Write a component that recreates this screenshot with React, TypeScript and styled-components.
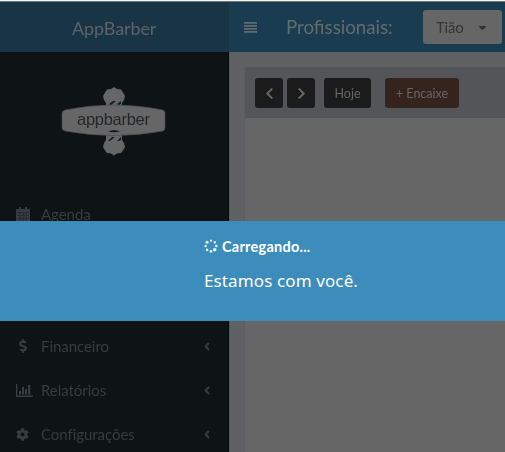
import React from "react";
import styled, { createGlobalStyle } from "styled-components";
import { FaAngleLeft, FaCaretDown, FaChevronLeft, FaChevronRight, FaCog, FaDollarSign } from "react-icons/fa";

const GlobalStyle = createGlobalStyle`
  * { box-sizing: border-box; }
  body { margin: 0; overflow: hidden; background: #666; font-family: Lato, "Open Sans", sans-serif; }
`;
const Screen = styled.div`
  position: relative;
  width: 505px;
  height: 452px;
  overflow: hidden;
  border-top: 1px solid #f4f4f4;
`;
const Page = styled.div`
  height: 451px;
  display: grid;
  grid-template-columns: 229px 1fr;
  grid-template-rows: 50px 1fr;
  border-top: 1px solid #71797d;
  background: #606163;
`;
const Label = styled.span<{ $spacing?: number }>`
  letter-spacing: ${(p) => p.$spacing ?? 0}px;
  white-space: nowrap;
  filter: blur(0.6px);
`;
const Glyph = styled.span<{ $size: number }>`
  display: inline-flex;
  font-size: ${(p) => p.$size}px;
  filter: blur(0.6px);
`;
const Brand = styled.div`
  background: #183445;
  color: #5b6468;
  font-size: 18px;
  line-height: 52px;
  padding-left: 72px;
`;
const Navbar = styled.header`
  display: flex;
  align-items: center;
  background: #1a3c50;
  color: #626b70;
  padding-left: 15px;
`;
const NavTitle = styled.div`
  width: 137px;
  margin-left: 29px;
  font-size: 18.7px;
`;
const Select = styled.div`
  display: flex;
  align-items: center;
  width: 79px;
  height: 34px;
  flex: none;
  padding: 0 13px;
  border-radius: 3px;
  background: #666;
  color: #353535;
  font-size: 15px;
  justify-content: space-between;
`;
const Sidebar = styled.aside`
  background: #0e1315;
  border-right: 1px solid #070b0d;
`;
const LogoBox = styled.div`
  height: 140px;
  padding: 34px 0 0 60px;
`;
const LogoDrawing = styled.svg`
  filter: blur(0.6px);
`;
const Menu = styled.nav`
  display: flex;
  flex-direction: column;
`;
const MenuItem = styled.div`
  height: 44px;
  display: grid;
  grid-template-columns: 25px 1fr 10px;
  align-items: center;
  padding: 0 16px;
  color: #363d40;
  font-size: 15px;
`;
const Main = styled.main`
  padding: 15px 0 0 14px;
  border-left: 1px solid #555759;
`;
const Panel = styled.section`
  height: 100%;
  border-left: 1px solid #5c5d60;
  border-radius: 3px 0 0;
  background: #666;
  overflow: hidden;
`;
const Toolbar = styled.div`
  display: flex;
  height: 51px;
  padding: 11px 0 0 10px;
  background: #545558;
`;
const Button = styled.div<{ $width: number; $gap: number; $brown?: boolean }>`
  display: flex;
  align-items: center;
  justify-content: center;
  width: ${(p) => p.$width}px;
  height: 30px;
  margin-right: ${(p) => p.$gap}px;
  border-radius: 3px;
  background: ${(p) => (p.$brown ? "#35231e" : "#1b1b1b")};
  color: #656565;
  font-size: 12.5px;
`;
const LoadingBand = styled.div`
  position: absolute;
  top: 220px;
  left: 0;
  width: 100%;
  height: 100px;
  padding: 16px 0 0 204px;
  background: #3c8dbc;
  color: #fff;
`;
const LoadingTitle = styled.div`
  display: flex;
  align-items: center;
  gap: 4px;
  height: 18px;
  font-size: 14.5px;
  font-weight: 700;
  letter-spacing: 0.24px;
`;
const LoadingText = styled.div`
  margin-top: 14px;
  font: 17px/24px "Noto Sans", sans-serif;
  letter-spacing: 0.12px;
  white-space: nowrap;
`;

function Logo() {
  return (
    <LogoDrawing width="108" height="71" viewBox="0 0 108 71">
      <g fill="#666">
        <path d="M54 1l3 2 4 .5 2 3 2 3.500-1 4-2 3v7H46v-7l-2-3-1-4 2-3.500 2-3 4-.5z" />
        <path d="M46 46h16v8l2 3 1 4-2 3.500-2 2.500-4 .5-3 2-3-2-4-.5-2-2.500-2-3.500 1-4 2-3z" />
      </g>
      <path d="M5 24Q54 14 103 24Q105 25 105 27V42Q105 44 103 45Q54 54 5 45Q2 44 2 42V27Q2 25 5 24Z" fill="#666" stroke="#45494a" strokeWidth=".6" />
      <g fill="#171c1e">
        <path d="M49 18l4-3h3l-5 4zM57 18l4-3v3l-2 1z" />
        <path d="M48 55l4-4h3l-5 4zM57 55l4-4v3l-2 1z" />
        <path d="M48 45.500Q54 42.500 60 45.500Q54 47 48 45.500z" />
      </g>
      <text x="17" y="39" fill="#242729" fontFamily="Liberation Sans, sans-serif" fontSize="16.500" textLength="73">appbarber</text>
    </LogoDrawing>
  );
}
function MenuBars() {
  return (
    <svg width="13" height="11" viewBox="0 0 13 11" fill="currentColor">
      <path d="M0 0h13v1.700H0zM0 3h13v1.700H0zM0 6h13v1.700H0zM0 9h13v1.700H0z" />
    </svg>
  );
}
function Calendar() {
  return (
    <svg width="14" height="15" viewBox="0 0 14 15">
      <path d="M1 2h12q1 0 1 1v12H0V3q0-1 1-1zM3 0h2v4H3zM9 0h2v4H9z" fill="#363b41" />
      <path d="M1 5.500h12M1 8.500h12M1 11.500h12M4.200 5v9M7.200 5v9M10.200 5v9" stroke="#1d2327" strokeWidth=".6" />
    </svg>
  );
}
function Chart() {
  return (
    <svg width="17" height="14" viewBox="0 0 17 14" fill="#393b43">
      <path d="M0 1h1.300v11.500H17V14H0zM3 8h2v3.500H3zM6 4h2v7.500H6zM9 6h2v5.500H9zM12 2h2.300v9.500H12z" />
    </svg>
  );
}
function Spinner() {
  const dots = [[7, 1.7, 1.1], [10.8, 3.2, 1.2], [12.3, 7, 1.3], [10.7, 10.8, 1.8], [7, 12.4, 1.4], [3.1, 10.9, 1.3], [1.6, 7, 1.2], [3.1, 3.2, 1.5]];
  return (
    <svg width="14" height="14" viewBox="0 0 14 14" fill="#e7f3f9">
      {dots.map(([x, y, r]) => <circle key={`${x}-${y}`} cx={x} cy={y} r={r} />)}
    </svg>
  );
}
const items = [
  { text: "Agenda", icon: <Calendar />, size: 14, arrow: false },
  { text: "Clientes", icon: null, size: 14, arrow: true },
  { text: "Cadastros", icon: null, size: 14, arrow: true },
  { text: "Financeiro", icon: <FaDollarSign />, size: 14, arrow: true },
  { text: "Relatórios", icon: <Chart />, size: 14, arrow: true },
  { text: "Configurações", icon: <FaCog />, size: 13, arrow: true },
];

export default function App() {
  return (
    <>
      <GlobalStyle />
      <Screen>
        <Page>
          <Brand><Label $spacing={-0.1}>AppBarber</Label></Brand>
          <Navbar>
            <Glyph $size={13}><MenuBars /></Glyph>
            <NavTitle><Label>Profissionais:</Label></NavTitle>
            <Select><Label $spacing={-0.2}>Tião</Label><Glyph $size={13}><FaCaretDown /></Glyph></Select>
          </Navbar>
          <Sidebar>
            <LogoBox><Logo /></LogoBox>
            <Menu>
              {items.map((item) => (
                <MenuItem key={item.text}>
                  <Glyph $size={item.size}>{item.icon}</Glyph>
                  <Label $spacing={-0.05}>{item.text}</Label>
                  {item.arrow && <Glyph $size={13}><FaAngleLeft /></Glyph>}
                </MenuItem>
              ))}
            </Menu>
          </Sidebar>
          <Main>
            <Panel>
              <Toolbar>
                <Button $width={28} $gap={4}><Glyph $size={13}><FaChevronLeft /></Glyph></Button>
                <Button $width={28} $gap={9}><Glyph $size={13}><FaChevronRight /></Glyph></Button>
                <Button $width={47} $gap={14}><Label>Hoje</Label></Button>
                <Button $width={74} $gap={0} $brown><Label>+ Encaixe</Label></Button>
              </Toolbar>
            </Panel>
          </Main>
        </Page>
        <LoadingBand>
          <LoadingTitle><Spinner />Carregando...</LoadingTitle>
          <LoadingText>Estamos com você.</LoadingText>
        </LoadingBand>
      </Screen>
    </>
  );
}
